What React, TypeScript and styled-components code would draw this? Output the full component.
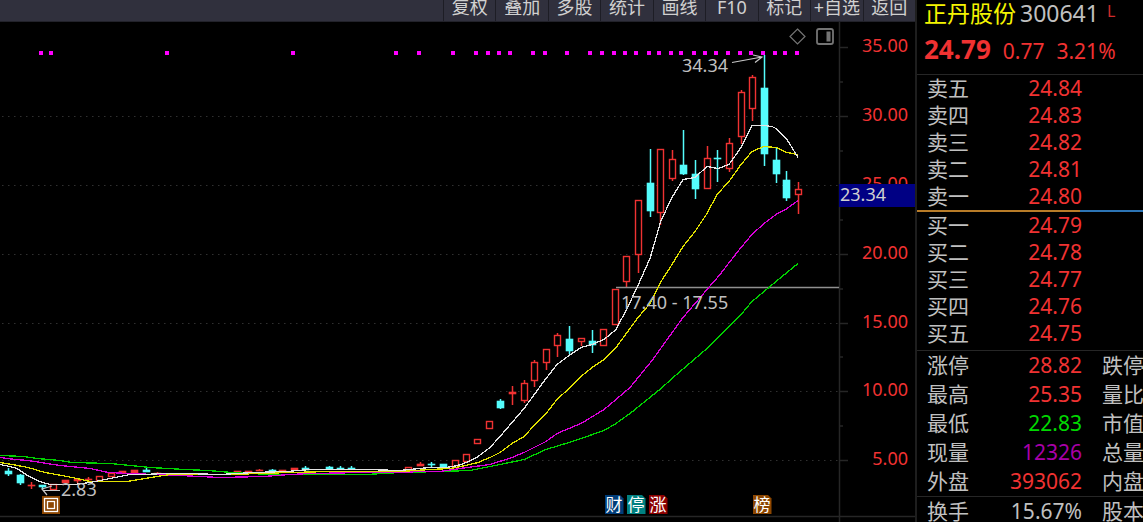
import React from 'react';
import styled, { createGlobalStyle } from 'styled-components';

const RED = '#f03232';
const CYAN = '#54fcfc';
const LINE = '#262626';
const TEXT = '#c0c0c0';

const GlobalStyle = createGlobalStyle`
  * { box-sizing: border-box; }
  body {
    margin: 0;
    background: #000;
    color: ${TEXT};
    font-family: "Noto Sans", "Noto Sans CJK SC", sans-serif;
    overflow: hidden;
  }
`;

const Page = styled.div`
  display: grid;
  grid-template-columns: minmax(0, 1fr) 228px;
  min-height: 100vh;
`;

const ChartPane = styled.main`
  min-width: 0;
`;

const Toolbar = styled.nav`
  display: flex;
  justify-content: flex-end;
  height: 22px;
  background: #30303d;
  border-bottom: 1px solid #22222a;
  overflow: hidden;
`;

const ToolGroup = styled.div`
  display: flex;
  flex: 0 1 472px;
  min-width: 0;
`;

const ToolButton = styled.button`
  flex: 1 1 0;
  min-width: 0;
  height: 22px;
  padding: 0 0 8px;
  border: 0;
  border-left: 1px solid #1d1d25;
  background: none;
  color: #d0d0d0;
  font: inherit;
  font-size: 18px;
  line-height: 14px;
  white-space: nowrap;
`;

const ChartSvg = styled.svg`
  display: block;
  width: 100%;
  height: auto;
  font-size: 18px;
`;

const QuotePanel = styled.aside`
  border-left: 2px solid #1e1e1e;
  overflow: hidden;
  white-space: nowrap;
`;

const QuoteHeader = styled.header`
  height: 75px;
  padding-left: 7px;
  border-bottom: 1px solid ${LINE};
`;

const NameRow = styled.h1`
  display: flex;
  gap: 4px;
  margin: 0;
  font-size: 23px;
  font-weight: 400;
  line-height: 26px;
`;

const StockName = styled.span`
  color: #f4f400;
`;

const Flag = styled.span`
  padding-left: 4px;
  color: #d02c2c;
  font-size: 16px;
  line-height: 22px;
`;

const PriceRow = styled.div`
  display: flex;
  align-items: baseline;
  gap: 12px;
  color: ${RED};
  font-size: 21px;
  line-height: 47px;
`;

const LastPrice = styled.strong`
  font-size: 26px;
`;

const Splitter = styled.div`
  display: flex;
  height: 2px;
`;

const SplitPart = styled.span<{ $color: string; $wide?: boolean }>`
  flex: ${(p) => (p.$wide ? '0 0 163px' : '1')};
  background: ${(p) => p.$color};
`;

const DataTable = styled.table<{ $row: number; $line?: boolean; $pad?: number }>`
  width: 100%;
  table-layout: fixed;
  border-collapse: separate;
  border-spacing: 0;
  padding-bottom: ${(p) => p.$pad ?? 0}px;
  border-bottom: ${(p) => (p.$line ? `1px solid ${LINE}` : '0')};
  font-size: 21px;
  line-height: ${(p) => p.$row}px;
`;

const Label = styled.th<{ $second?: boolean }>`
  width: ${(p) => (p.$second ? 'auto' : '65px')};
  height: 27px;
  padding: 0 0 0 ${(p) => (p.$second ? 20 : 10)}px;
  font-weight: 400;
  text-align: left;
  overflow: hidden;
`;

const Value = styled.td<{ $color?: string }>`
  width: 100px;
  padding: 0;
  color: ${(p) => p.$color ?? RED};
  text-align: right;
`;

const tools = ['复权', '叠加', '多股', '统计', '画线', 'F10', '标记', '+自选', '返回'];

const asks = [['卖五', '24.84'], ['卖四', '24.83'], ['卖三', '24.82'], ['卖二', '24.81'], ['卖一', '24.80']];
const bids = [['买一', '24.79'], ['买二', '24.78'], ['买三', '24.77'], ['买四', '24.76'], ['买五', '24.75']];
const stats = [
  ['涨停', '28.82', RED, '跌停'],
  ['最高', '25.35', RED, '量比'],
  ['最低', '22.83', '#00d800', '市值'],
  ['现量', '12326', '#a800a8', '总量'],
  ['外盘', '393062', RED, '内盘'],
];
const turnover = [['换手', '15.67%', TEXT, '股本']];

type Kind = 'up' | 'solid' | 'down';
// centre x, kind, body top, body bottom, high, low
const candles: [number, Kind, number, number, number, number][] = [
  [8, 'down', 471, 474, 468, 476], [20, 'down', 475, 483, 474, 485], [31, 'solid', 485, 486, 482, 489],
  [42, 'down', 485, 487, 485, 489], [53, 'up', 484, 489, 484, 489], [65, 'solid', 480, 483, 480, 483],
  [77, 'solid', 479, 481, 478, 483], [88, 'solid', 479, 480, 477, 482], [99, 'up', 476, 480, 476, 480],
  [111, 'up', 473, 476, 473, 476], [122, 'solid', 471, 473, 471, 473], [134, 'solid', 470, 473, 470, 473],
  [146, 'down', 470, 472, 467, 472], [157, 'solid', 473, 474, 472, 475], [237, 'solid', 471, 473, 471, 473],
  [248, 'solid', 471, 472, 471, 472], [259, 'solid', 470, 471, 469, 471], [272, 'down', 470, 471, 469, 472],
  [282, 'solid', 470, 471, 470, 472], [294, 'solid', 468, 470, 468, 470], [305, 'down', 468, 470, 466, 470],
  [329, 'down', 467, 469, 466, 469], [340, 'down', 468, 469, 466, 469], [351, 'down', 468, 469, 466, 469],
  [408, 'up', 467, 470, 467, 470], [420, 'solid', 464, 466, 462, 466], [431, 'down', 464, 465, 462, 467],
  [443, 'down', 464, 467, 464, 467], [455, 'up', 460, 467, 460, 467], [466, 'up', 454, 461, 454, 461],
  [477, 'up', 439, 443, 439, 443], [489, 'up', 421, 428, 421, 428], [500, 'down', 401, 408, 399, 409],
  [512, 'solid', 392, 394, 386, 405], [524, 'up', 383, 400, 380, 403], [534, 'up', 362, 380, 360, 387],
  [546, 'up', 349, 362, 349, 370], [557, 'up', 335, 345, 333, 357], [569, 'down', 339, 351, 326, 354],
  [581, 'up', 338, 341, 338, 346], [592, 'down', 341, 345, 330, 353], [603, 'up', 329, 345, 329, 345],
  [615, 'up', 289, 324, 289, 324], [626, 'up', 256, 281, 256, 287], [638, 'up', 200, 254, 200, 273],
  [650, 'down', 183, 211, 149, 217], [660, 'up', 149, 212, 149, 225], [672, 'up', 159, 178, 150, 181],
  [683, 'down', 165, 174, 130, 175], [695, 'down', 174, 189, 160, 199], [707, 'up', 158, 188, 146, 188],
  [717, 'down', 158, 159, 150, 182], [729, 'up', 143, 168, 138, 172], [741, 'up', 92, 136, 90, 144],
  [752, 'up', 77, 108, 75, 121], [764, 'down', 88, 154, 55, 166], [776, 'down', 160, 174, 148, 183],
  [786, 'down', 180, 198, 171, 201], [798, 'up', 189, 194, 182, 214],
];

const averages = [
  { color: '#00d000', points: '0,455 24,456 37,458 60,460 72,462 110,463 150,467 185,469 208,470 232,472 270,474 366,474 400,472 440,471 470,470 490,466 500,464 524,459 546,449 569,442 581,438 604,430 616,423 630,413 661,388 672,378 693,360 707,348 720,335 730,325 741,314 752,301 764,291 776,281 787,272 798,263' },
  { color: '#d800d8', points: '0,457 15,459 28,460 60,465 90,468 108,472 130,473 180,475 220,477 264,476 290,474 310,473 365,472 440,471 467,467 490,464 512,457 524,452 546,441 557,433 581,423 604,409 616,399 630,387 652,360 683,317 707,289 720,274 730,261 741,247 752,234 764,223 776,214 787,208 798,200' },
  { color: '#e0e000', points: '0,462 12,464 28,467 45,472 62,475 77,478 90,481 127,481 145,478 157,476 170,474 230,474 290,472 330,471 400,471 430,469 450,468 461,466 478,462 490,457 500,452 512,443 524,436 535,424 546,413 557,399 569,388 581,376 592,367 604,359 616,347 627,332 638,317 650,303 661,281 672,264 683,246 695,231 707,213 717,194 729,181 741,164 752,151 764,146 776,147 787,152 798,154' },
  { color: '#e4e4e4', points: '0,464 10,466 17,468 26,474 35,479 43,482 50,484 75,484 90,482 100,480 115,477 130,474 145,474 163,473 185,473 220,474 254,472 287,471 310,469 366,469 400,470 430,467 445,467 453,466 461,464 469,461 478,456 490,447 500,436 512,422 524,408 535,393 546,378 557,364 569,355 581,347 592,344 604,339 616,329 627,308 638,285 650,258 661,220 672,197 683,179 695,177 707,166 718,168 729,164 741,147 752,125 764,125 772,126 776,128 787,139 798,157' },
];

const signals = [41, 51, 167, 293, 396, 419, 453, 476, 488, 499, 510, 533, 545, 567, 590, 602, 614, 625, 636, 649, 659, 671, 681, 694, 705, 716, 728, 740, 751, 763, 775, 785, 797];

const scale = [
  { label: '35.00', y: 47 }, { label: '30.00', y: 116 }, { label: '25.00', y: 185 }, { label: '20.00', y: 254 },
  { label: '15.00', y: 323 }, { label: '10.00', y: 391 }, { label: '5.00', y: 460 },
];

const events = [
  { label: '财', x: 605, color: '#003c78' },
  { label: '停', x: 627, color: '#008080' },
  { label: '涨', x: 649, color: '#8c0000' },
  { label: '榜', x: 753, color: '#8c4600' },
];

function Candle({ data }: { data: (typeof candles)[number] }) {
  const [x, kind, top, bottom, high, low] = data;
  const color = kind === 'down' ? CYAN : RED;
  return (
    <g stroke={color} strokeWidth={1.5}>
      {high < top && <path d={`M${x + 0.5} ${high}V${top}`} />}
      {low > bottom && <path d={`M${x + 0.5} ${bottom}V${low}`} />}
      {kind === 'up' ? (
        <rect x={x - 2.5} y={top + 0.5} width={6} height={bottom - top} fill="#000" strokeWidth={1.4} />
      ) : (
        <rect x={x - 3} y={top} width={7} height={bottom - top} fill={color} strokeWidth={0.6} />
      )}
    </g>
  );
}

function Chart() {
  return (
    <ChartSvg viewBox="0 22 915 500" role="img" aria-label="正丹股份 K线">
      <g stroke="#303030" strokeDasharray="1.5 4.5">
        {scale.slice(1).map((s) => <path key={s.label} d={`M2 ${s.y + 0.5}H838`} />)}
      </g>
      <g stroke={LINE} strokeWidth={1.5}>
        <path d="M839.5 22V522M0 516.5H915" />
        {scale.map((s) => <path key={s.label} d={`M840 ${s.y + 0.5}H848`} />)}
        {scale.slice(1).map((s) => <path key={s.label} d={`M840 ${s.y - 34}H843`} />)}
      </g>
      <g fill={RED} textAnchor="end">
        {scale.map((s) => <text key={s.label} x={908} y={s.y + 5}>{s.label}</text>)}
      </g>

      {candles.map((c) => <Candle key={c[0]} data={c} />)}
      <path d="M616 287.5H839" stroke="#909090" strokeWidth={1.5} />
      {averages.map((a) => (
        <polyline
          key={a.color}
          points={a.points}
          transform="translate(0 .5)"
          fill="none"
          stroke={a.color}
          strokeWidth={1.3}
          shapeRendering="crispEdges"
        />
      ))}
      <g fill="#ff00ff">
        {signals.map((x) => <rect key={x} x={x - 2} y={51} width={4} height={4} />)}
      </g>

      <g fill={TEXT}>
        <text x={682} y={72}>34.34</text>
        <text x={621} y={309}>17.40 - 17.55</text>
        <text x={61} y={496}>2.83</text>
      </g>
      <g fill="none" stroke="#c8c8c8" strokeWidth={1.2}>
        <path d="M732 62.5L762 57M753 55L762 57L755 62.5" />
        <path d="M60 490.5H43M52 486L42 489L47 495" />
      </g>

      <g fill="none" stroke="#747474">
        <path d="M797.5 29L805 36.5L797.5 44L790 36.5Z" strokeWidth={1.2} />
        <rect x={817} y={29} width={16} height={15} rx={2} strokeWidth={1.8} />
        <rect x={827} y={32} width={3} height={9} fill="#747474" />
      </g>

      <rect x={42} y={496} width={18} height={18} fill="#8c4600" />
      <g fill="none" stroke="#fff" strokeWidth={1.3}>
        <rect x={44.5} y={498.5} width={13} height={13} />
        <rect x={47.5} y={501.5} width={7} height={7} />
      </g>
      <g fontSize={17} textAnchor="middle">
        {events.map((e) => (
          <g key={e.label}>
            <path d={`M${e.x} 495h15l3.500 3.500V514h-18.500z`} fill={e.color} />
            <text x={e.x + 9} y={511} fill="#fff">{e.label}</text>
          </g>
        ))}
      </g>

      <rect x={839} y={184} width={76} height={23} fill="#000084" />
      <text x={840} y={201} fill="#d0d0d0">23.34</text>
    </ChartSvg>
  );
}

function Rows({ rows }: { rows: string[][] }) {
  return (
    <tbody>
      {rows.map(([label, value, color, second]) => (
        <tr key={label}>
          <Label scope="row">{label}</Label>
          <Value $color={color}>{value}</Value>
          <Label as={second ? 'th' : 'td'} $second>{second}</Label>
        </tr>
      ))}
    </tbody>
  );
}

export default function App() {
  return (
    <>
      <GlobalStyle />
      <Page>
        <ChartPane>
          <Toolbar>
            <ToolGroup>
              {tools.map((t) => <ToolButton key={t} type="button">{t}</ToolButton>)}
            </ToolGroup>
          </Toolbar>
          <Chart />
        </ChartPane>
        <QuotePanel>
          <QuoteHeader>
            <NameRow>
              <StockName>正丹股份</StockName>
              <span>300641</span>
              <Flag>L</Flag>
            </NameRow>
            <PriceRow>
              <LastPrice>24.79</LastPrice>
              <span>0.77</span>
              <span>3.21%</span>
            </PriceRow>
          </QuoteHeader>
          <DataTable $row={27}><Rows rows={asks} /></DataTable>
          <Splitter>
            <SplitPart $color="#b87c28" $wide />
            <SplitPart $color="#2c74b4" />
          </Splitter>
          <DataTable $row={27} $line $pad={3}><Rows rows={bids} /></DataTable>
          <DataTable $row={29} $line><Rows rows={stats} /></DataTable>
          <DataTable $row={29}><Rows rows={turnover} /></DataTable>
        </QuotePanel>
      </Page>
    </>
  );
}
